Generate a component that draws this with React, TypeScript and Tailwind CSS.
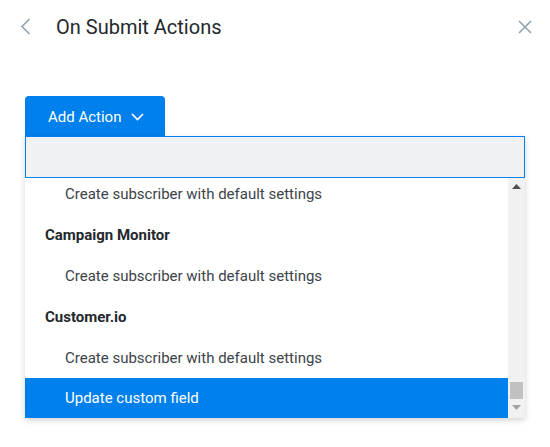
const rows: { label: string; kind: 'group' | 'action'; active?: boolean }[] = [
  { label: 'Create subscriber with default settings', kind: 'action' },
  { label: 'Campaign Monitor', kind: 'group' },
  { label: 'Create subscriber with default settings', kind: 'action' },
  { label: 'Customer.io', kind: 'group' },
  { label: 'Create subscriber with default settings', kind: 'action' },
  { label: 'Update custom field', kind: 'action', active: true },
]

function Scrollbar() {
  return (
    <div className="flex w-[17px] shrink-0 flex-col items-center bg-[#f1f1f1]">
      <svg width="9" height="5" viewBox="0 0 9 5" className="mt-[6px] fill-[#505050]">
        <path d="M0 5 L4.5 0 L9 5 Z" />
      </svg>
      <div className="mt-auto h-[17px] w-[13px] bg-[#c1c1c1]" />
      <svg width="9" height="5" viewBox="0 0 9 5" className="mb-[8px] mt-[6px] fill-[#a3a3a3]">
        <path d="M0 0 L9 0 L4.5 5 Z" />
      </svg>
    </div>
  )
}

export default function App() {
  return (
    <div className="min-h-[447px] w-[550px] bg-white font-['Roboto',sans-serif]">
      <div className="flex h-[52px] items-center pl-[20px] pr-[18px] pt-[1px]">
        <svg width="11" height="17" viewBox="0 0 11 17" fill="none" className="text-[#93a2ae]">
          <path d="M9.5 1 L2 8.5 L9.5 16" stroke="currentColor" strokeWidth="1.6" />
        </svg>
        <h1 className="ml-[25px] text-[20px] text-[#23282d]">On Submit Actions</h1>
        <svg width="14" height="14" viewBox="0 0 14 14" fill="none" className="ml-auto text-[#93a2ae]">
          <path d="M1 1 L13 13 M13 1 L1 13" stroke="currentColor" strokeWidth="1.6" />
        </svg>
      </div>

      <div className="mx-[25px] mt-[44px]">
        <button className="flex h-[40px] w-[140px] items-center gap-[10px] rounded-t-[4px] bg-[#0080ed] pl-[23px] pt-[2px] text-[15px] text-white">
          Add Action
          <svg width="13" height="8" viewBox="0 0 13 8" fill="none">
            <path d="M1 1 L6.5 6.5 L12 1" stroke="currentColor" strokeWidth="1.7" />
          </svg>
        </button>
        <div className="shadow-[0_2px_6px_rgba(0,0,0,0.18)]">
          <input className="block h-[42px] w-full border border-[#0080ed] bg-[#f0f1f3] px-3 text-[15px] outline-none" />
          <div className="flex h-[240px] bg-white text-[15px]">
            <div className="flex-1 overflow-hidden">
              <div className="-mt-[5px]">
                {rows.map((r, i) => (
                  <div
                    key={i}
                    className={
                      r.kind === 'group'
                        ? 'flex h-[41px] items-center pl-[20px] pt-[1px] font-bold text-[#23282d]'
                        : r.active
                          ? 'flex h-[40px] items-center bg-[#0080ed] pl-[40px] text-white'
                          : 'flex h-[41px] items-center pl-[40px] pt-[1px] text-[#3c434a]'
                    }
                  >
                    {r.label}
                  </div>
                ))}
              </div>
            </div>
            <Scrollbar />
          </div>
        </div>
      </div>
    </div>
  )
}
